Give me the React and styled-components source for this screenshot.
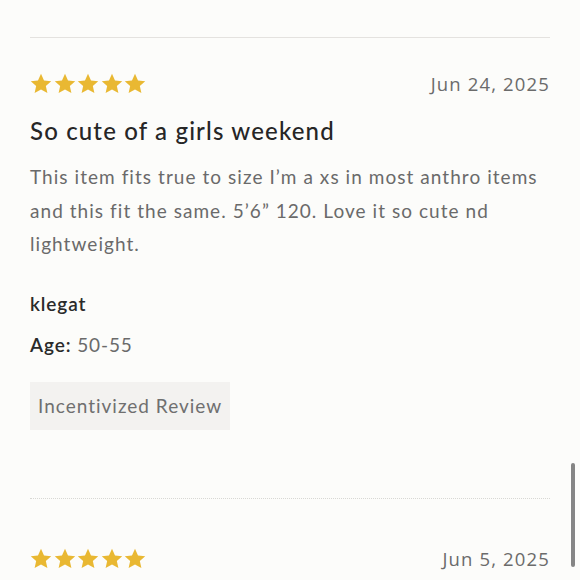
import React from "react";
import styled, { createGlobalStyle } from "styled-components";

const Global = createGlobalStyle`
  html, body { margin: 0; padding: 0; background: #fcfcfa; }
  body { font-family: "Lato", "Noto Sans", sans-serif; -webkit-font-smoothing: antialiased; }
`;

const Page = styled.div`
  width: 580px;
  height: 580px;
  overflow: hidden;
  position: relative;
  background: #fcfcfa;
`;

const List = styled.div`
  padding: 0 30px;
`;

const Divider = styled.div`
  height: 0;
  border-top: ${(p) => (p.$dotted ? "1px dotted #d8d8d4" : "1px solid #e4e2df")};
  margin-top: ${(p) => p.$top}px;
`;

const Review = styled.div`
  display: flex;
  flex-direction: column;
  padding-top: ${(p) => p.$pad}px;
`;

const TopRow = styled.div`
  display: flex;
  justify-content: space-between;
  align-items: center;
  height: 22px;
`;

const Stars = styled.div`
  display: flex;
  gap: 1.5px;
`;

const Date = styled.span`
  font-family: "Open Sans", "Noto Sans", sans-serif;
  font-size: 18.5px;
  color: #6b6b6b;
  letter-spacing: 1.15px;
`;

const Title = styled.h3`
  margin: 22px 0 0;
  font-family: "Lato", sans-serif;
  font-weight: 500;
  font-size: 24px;
  line-height: 30px;
  color: #262626;
  letter-spacing: 1.15px;
`;

const Body = styled.p`
  margin: 14px 0 0;
  font-size: 19px;
  line-height: 33.5px;
  color: #6a6a6a;
  letter-spacing: 1.05px;
`;

const Author = styled.div`
  margin-top: 31px;
  font-size: 19px;
  font-weight: 600;
  color: #2a2a2a;
  letter-spacing: 0.9px;
  line-height: 24px;
`;

const Meta = styled.div`
  margin-top: 17px;
  font-size: 19px;
  line-height: 24px;
  color: #6a6a6a;
  letter-spacing: 0.9px;
  b { color: #2a2a2a; font-weight: 600; }
`;

const Badge = styled.span`
  align-self: flex-start;
  margin-top: 25px;
  background: #f3f2f0;
  color: #6f6f6f;
  font-size: 19px;
  letter-spacing: 1px;
  padding: 12px 8px;
  line-height: 24px;
`;

const Scrollbar = styled.div`
  position: absolute;
  right: 5px;
  top: 463px;
  width: 4px;
  height: 104px;
  border-radius: 2px;
  background: #858585;
`;

const Star = () => (
  <svg width="22" height="21" viewBox="0 0 24 23">
    <path
      d="M12 0.8l3.3 7.3 7.9 0.8-5.9 5.3 1.7 7.8L12 18l-7 4 1.7-7.8L0.8 8.9l7.9-0.8z"
      fill="#e9b832"
    />
  </svg>
);

const StarRow = () => (
  <Stars>
    {[0, 1, 2, 3, 4].map((i) => (
      <Star key={i} />
    ))}
  </Stars>
);

export default function App() {
  return (
    <Page>
      <Global />
      <List>
        <Divider $top={37} />
        <Review $pad={34}>
          <TopRow>
            <StarRow />
            <Date>Jun 24, 2025</Date>
          </TopRow>
          <Title>So cute of a girls weekend</Title>
          <Body>
            This item fits true to size I’m a xs in most anthro items and this fit the same. 5’6” 120. Love it so cute nd lightweight.
          </Body>
          <Author>klegat</Author>
          <Meta>
            <b>Age:</b> 50-55
          </Meta>
          <Badge>Incentivized Review</Badge>
        </Review>
        <Divider $dotted $top={68} />
        <Review $pad={49}>
          <TopRow>
            <StarRow />
            <Date>Jun 5, 2025</Date>
          </TopRow>
        </Review>
      </List>
      <Scrollbar />
    </Page>
  );
}
